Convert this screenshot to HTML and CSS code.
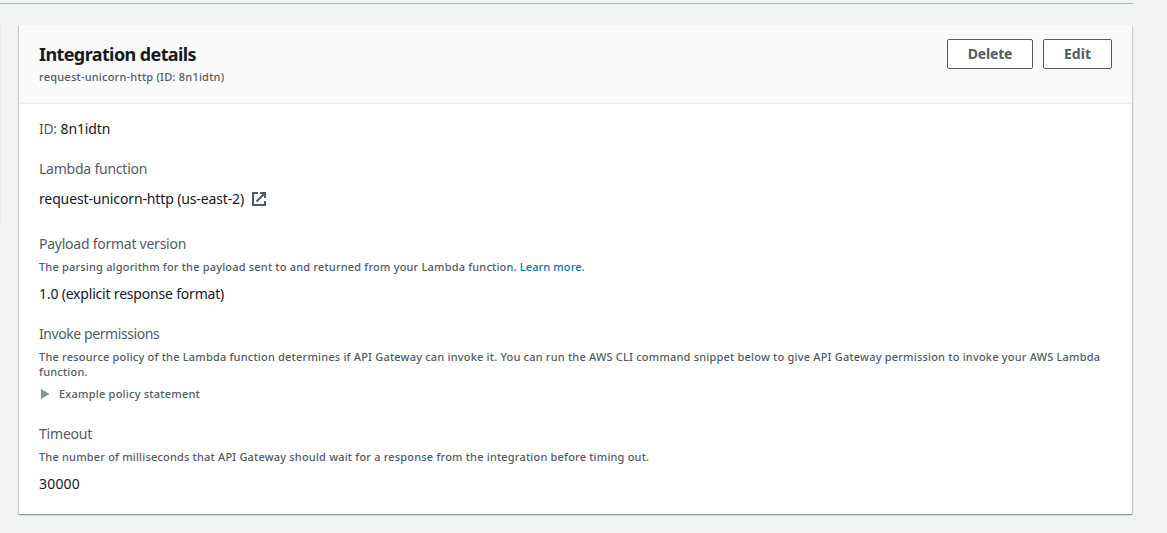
FILE: index.html
```html
<!DOCTYPE html>
<html lang="en">
<head>
<meta charset="utf-8">
<title>Integration details</title>
<link rel="stylesheet" href="styles.css">
</head>
<body>
<div class="divider"></div>
<div class="content">
  <div class="neighbor"></div>
  <main class="panel">
    <header class="panel-header">
      <div>
        <h2 class="title">Integration details</h2>
        <p class="subtitle"><span>request-unicorn-http (ID: 8n1idtn)</span></p>
      </div>
      <div class="actions">
        <button class="btn btn-delete"><span>Delete</span></button>
        <button class="btn btn-edit"><span>Edit</span></button>
      </div>
    </header>
    <div class="panel-body">
      <section class="field">
        <p class="label"><span class="id-label">ID:</span> <span class="dark id-value">8n1idtn</span></p>
      </section>
      <section class="field field-lambda">
        <h3 class="label"><span class="t-lambda">Lambda function</span></h3>
        <p class="value value-link"><span class="t-name">request-unicorn-http (us-east-2)</span>
          <svg class="external" width="16" height="16" viewBox="0 0 16 16" fill="none" stroke="#545b64" stroke-width="2"><path d="M7 2H2v12h12V10M9 2h5v5M5.5 10.500l8-8"/></svg>
        </p>
      </section>
      <section class="field">
        <h3 class="label"><span class="t-payload">Payload format version</span></h3>
        <p class="desc"><span class="t-parsing">The parsing algorithm for the payload sent to and returned from your Lambda function.</span> <a class="link">Learn more.</a></p>
        <p class="value"><span class="t-format">1.0 (explicit response format)</span></p>
      </section>
      <section class="field">
        <h3 class="label"><span class="t-invoke">Invoke permissions</span></h3>
        <p class="desc"><span class="t-policy">The resource policy of the Lambda function determines if API Gateway can invoke it. You can run the AWS CLI command snippet below to give API Gateway permission to invoke your AWS Lambda</span><br>function.</p>
        <div class="expander"><svg width="10" height="12" viewBox="0 0 10 12"><path d="M1 1l8.500 5L1 11z" fill="#879596"/></svg><span class="t-example">Example policy statement</span></div>
      </section>
      <section class="field">
        <h3 class="label"><span class="t-timeout">Timeout</span></h3>
        <p class="desc"><span class="t-millis">The number of milliseconds that API Gateway should wait for a response from the integration before timing out.</span></p>
        <p class="value"><span class="t-number">30000</span></p>
      </section>
    </div>
  </main>
</div>
</body>
</html>
```
FILE: styles.css
```css
* { box-sizing: border-box; }
body {
  margin: 0;
  height: 533px;
  overflow: hidden;
  background: #f2f4f4;
  color: #545b64;
  font-family: "Noto Sans", "Open Sans", sans-serif;
}
h2, h3, p { margin: 0; white-space: nowrap; }
.divider { width: 1133px; height: 4px; border-bottom: 1px solid #aab7b8; }
.content { display: flex; align-items: flex-start; padding-top: 21px; }
.neighbor { width: 1px; height: 198px; margin-right: 18px; background: #e9ecec; }
.panel {
  width: 1113px;
  height: 489px;
  background: #fff;
  box-shadow: 0 1px 0 0 #879596, 0 1px 1px 0 rgba(0, 28, 36, .2), 1px 1px 1px 0 rgba(0, 28, 36, .15), -1px 1px 1px 0 rgba(0, 28, 36, .15);
}
.panel-header {
  display: flex;
  justify-content: space-between;
  height: 79px;
  padding: 14px 20px 0;
  background: #fafafa;
  border-bottom: 1px solid #eaeded;
}
.title { font-size: 18px; line-height: 30px; font-weight: 700; color: #16191f; letter-spacing: -.6px; }
.subtitle { font-size: 11px; line-height: 16px; font-weight: 500; letter-spacing: .22px; }
.actions { display: flex; gap: 10px; }
.btn {
  height: 30px;
  padding: 0;
  border: 1px solid #545b64;
  border-radius: 2px;
  background: #fff;
  color: #545b64;
  font: 700 14px/28px "Noto Sans", sans-serif;
  letter-spacing: -.2px;
}
.btn-delete { width: 86px; }
.btn-edit { width: 69px; letter-spacing: 0; }
.panel-body { display: flex; flex-direction: column; gap: 20px; padding: 15px 20px 0; }
.label { font-size: 14px; line-height: 20px; font-weight: 400; }
.desc { font-size: 11px; line-height: 15px; font-weight: 500; padding-top: 5px; letter-spacing: .2px; }
.value { font-size: 14px; line-height: 20px; padding-top: 10px; color: #16191f; }
.dark { color: #16191f; }
.value-link { display: flex; align-items: center; gap: 7px; }
.field-lambda { margin-bottom: 5px; }
.link { color: #0073bb; letter-spacing: .1px; }
.expander { display: flex; align-items: center; gap: 9px; padding: 7px 0 3px 1px; font-size: 11px; line-height: 15px; font-weight: 500; letter-spacing: .23px; }
.id-label { letter-spacing: -.3px; }
.id-value { letter-spacing: -.1px; }
.t-lambda { letter-spacing: -.23px; }
.t-name { letter-spacing: -.13px; }
.t-payload { letter-spacing: -.25px; }
.t-parsing, .t-millis { letter-spacing: .185px; }
.t-format { letter-spacing: -.19px; }
.t-invoke { letter-spacing: -.42px; }
.t-timeout { letter-spacing: -.2px; }
.t-number { letter-spacing: .2px; }
```
